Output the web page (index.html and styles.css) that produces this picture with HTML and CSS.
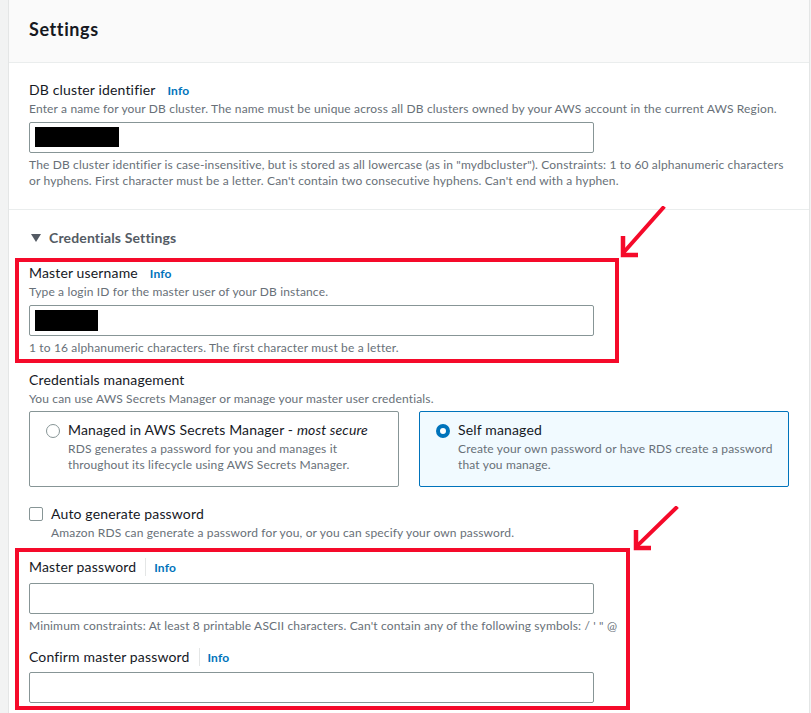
FILE: index.html
```html
<!DOCTYPE html>
<html>
<head>
<meta charset="utf-8">
<link rel="stylesheet" href="styles.css">
</head>
<body>
<div class="page">
  <div class="panel">
    <div class="panel-header"><h2 class="title">Settings</h2></div>

    <div class="section section-first">
      <div class="field">
        <div class="label-row"><span class="label">DB cluster identifier</span><a class="info">Info</a></div>
        <div class="desc">Enter a name for your DB cluster. The name must be unique across all DB clusters owned by your AWS account in the current AWS Region.</div>
        <div class="input"><span class="redact redact-a"></span></div>
        <div class="hint">The DB cluster identifier is case-insensitive, but is stored as all lowercase (as in "mydbcluster"). Constraints: 1 to 60 alphanumeric characters or hyphens. First character must be a letter. Can't contain two consecutive hyphens. Can't end with a hyphen.</div>
      </div>
    </div>

    <div class="section section-creds">
      <div class="expander"><span class="caret"></span><span>Credentials Settings</span></div>

      <div class="field field-user">
        <div class="label-row"><span class="label">Master username</span><a class="info">Info</a></div>
        <div class="desc">Type a login ID for the master user of your DB instance.</div>
        <div class="input"><span class="redact redact-b"></span></div>
        <div class="hint">1 to 16 alphanumeric characters. The first character must be a letter.</div>
      </div>

      <div class="field field-mgmt">
        <div class="label-row"><span class="label">Credentials management</span></div>
        <div class="desc">You can use AWS Secrets Manager or manage your master user credentials.</div>
        <div class="tiles">
          <div class="tile">
            <span class="radio"></span>
            <div class="tile-text">
              <div class="tile-title">Managed in AWS Secrets Manager - <em>most secure</em></div>
              <div class="tile-desc">RDS generates a password for you and manages it throughout its lifecycle using AWS Secrets Manager.</div>
            </div>
          </div>
          <div class="tile tile-selected">
            <span class="radio radio-on"></span>
            <div class="tile-text">
              <div class="tile-title">Self managed</div>
              <div class="tile-desc">Create your own password or have RDS create a password that you manage.</div>
            </div>
          </div>
        </div>
      </div>

      <div class="check-row">
        <span class="checkbox"></span>
        <div>
          <div class="check-label">Auto generate password</div>
          <div class="desc">Amazon RDS can generate a password for you, or you can specify your own password.</div>
        </div>
      </div>

      <div class="field field-pw">
        <div class="label-row"><span class="label">Master password</span><span class="sep"></span><a class="info">Info</a></div>
        <div class="input"></div>
        <div class="hint">Minimum constraints: At least 8 printable ASCII characters. Can't contain any of the following symbols: / ' " @</div>
      </div>

      <div class="field field-pw2">
        <div class="label-row"><span class="label">Confirm master password</span><span class="sep"></span><a class="info">Info</a></div>
        <div class="input"></div>
      </div>
    </div>
  </div>

  <div class="mark mark-1"></div>
  <div class="mark mark-2"></div>

  <svg class="arrow arrow-1" width="50" height="54" viewBox="0 0 50 54">
    <path d="M44 2 L5 46" stroke="#f50a2a" stroke-width="4" fill="none" stroke-linecap="square"/>
    <path d="M4 30 L4 49 L19 49" stroke="#f50a2a" stroke-width="4.5" fill="none" stroke-linejoin="miter"/>
  </svg>
  <svg class="arrow arrow-2" width="50" height="48" viewBox="0 0 50 48">
    <path d="M44 2 L5 40" stroke="#f50a2a" stroke-width="4" fill="none" stroke-linecap="square"/>
    <path d="M4 24 L4 42 L19 42" stroke="#f50a2a" stroke-width="4.5" fill="none" stroke-linejoin="miter"/>
  </svg>
</div>
</body>
</html>
```

FILE: styles.css
```css
* { box-sizing: border-box; }
html, body { margin: 0; padding: 0; }
body {
  background: #f2f3f3;
  font-family: Lato, "Open Sans", Arial, sans-serif;
  color: #16191f;
  letter-spacing: 0.15px;
  width: 811px;
  height: 713px;
  overflow: hidden;
}
.page { position: relative; width: 811px; height: 713px; }
.panel {
  margin-left: 8px;
  width: 802px;
  height: 713px;
  background: #fff;
  border-left: 1px solid #e4e6e6;
  border-right: 1px solid #e4e6e6;
}
.panel-header {
  height: 63px;
  background: #fafafa;
  border-bottom: 1px solid #eaeded;
  padding: 0 20px;
  display: flex;
  align-items: center;
}
.title {
  margin: 0;
  font-size: 18px;
  font-weight: 700;
  line-height: 22px;
  letter-spacing: 0.6px;
  position: relative;
  top: -2px;
}
.section { padding: 16px 20px 20px; }
.section-first { border-bottom: 1px solid #eaeded; }
.section-creds { padding-top: 17px; }

.label-row { display: flex; align-items: center; height: 22px; }
.label { font-size: 14px; line-height: 22px; }
.info {
  font-size: 12px;
  font-weight: 700;
  color: #0073bb;
  margin-left: 12px;
}
.sep {
  width: 1px;
  height: 18px;
  background: #e4e6e6;
  margin-left: 9px;
}
.sep + .info { margin-left: 8px; }
.desc, .hint, .tile-desc {
  font-size: 12px;
  line-height: 16px;
  color: #687078;
}
.input {
  width: 565px;
  height: 31px;
  border: 1px solid #879596;
  border-radius: 2px;
  background: #fff;
  margin-top: 5px;
  padding: 4px 5px;
}
.hint { margin-top: 4px; }
.redact { display: block; background: #000; height: 20px; }
.redact-a { width: 84px; }
.redact-b { width: 63px; height: 21px; }

.expander {
  display: flex;
  align-items: center;
  font-size: 14px;
  font-weight: 700;
  line-height: 22px;
  color: #545b64;
}
.caret {
  width: 0; height: 0;
  border-left: 5px solid transparent;
  border-right: 5px solid transparent;
  border-top: 8px solid #545b64;
  margin: 0 8px 0 2px;
}
.field-user { margin-top: 13px; }
.field-mgmt { margin-top: 13px; }
.tiles { display: flex; gap: 20px; margin-top: 4px; }
.tile {
  width: 370px;
  height: 76px;
  border: 1px solid #879596;
  border-radius: 2px;
  padding: 7px 16px 12px;
  display: flex;
  align-items: flex-start;
}
.tile-selected { border-color: #0073bb; background: #f1faff; }
.radio {
  flex: none;
  width: 14px; height: 14px;
  border-radius: 50%;
  border: 1.5px solid #879596;
  margin-top: 5px;
  margin-right: 8px;
  background: #fff;
}
.radio-on { border: 4px solid #0073bb; }
.tile-title { font-size: 14px; line-height: 22px; }
.tile-desc { width: 320px; }

.check-row { display: flex; align-items: flex-start; margin-top: 16px; }
.checkbox {
  flex: none;
  width: 14px; height: 14px;
  border: 1.5px solid #879596;
  border-radius: 2px;
  margin-top: 4px;
  margin-right: 8px;
}
.check-label { font-size: 14px; line-height: 22px; }
.field-pw { margin-top: 15px; }
.field-pw .input { margin-top: 5px; }
.field-pw2 { margin-top: 12px; }
.field-pw2 .input { margin-top: 4px; }

.mark { position: absolute; border: 4px solid #f50a2a; }
.mark-1 { left: 15px; top: 258px; width: 604px; height: 105px; }
.mark-2 { left: 15px; top: 548px; width: 615px; height: 162px; }
.arrow { position: absolute; }
.arrow-1 { left: 619px; top: 206px; }
.arrow-2 { left: 632px; top: 506px; }
```
